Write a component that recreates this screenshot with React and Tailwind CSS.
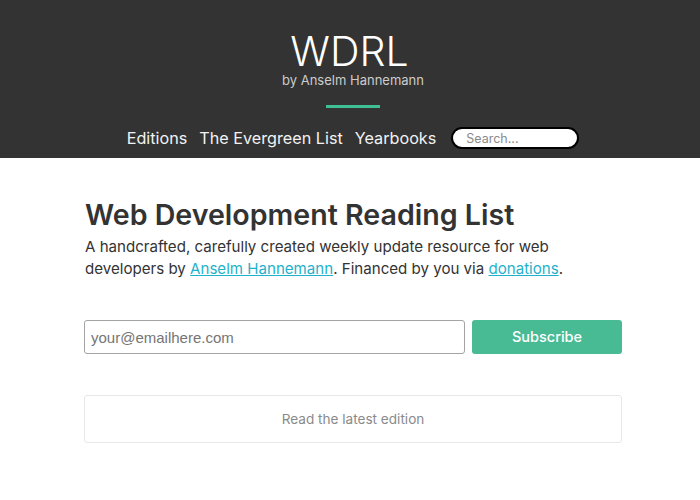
export default function App() {
  return (
    <div className="min-h-[500px] bg-white" style={{ fontFamily: 'Inter, "Noto Sans", sans-serif' }}>
      <header className="h-[158px] bg-[#333333] pt-[28px] pl-[6px] flex flex-col items-center">
        <h1 className="pr-[7px] text-[41px] leading-[46px] font-light text-white">WDRL</h1>
        <div className="-mt-[2px] text-[13px] leading-[16px] text-[#cccccc]">by Anselm Hannemann</div>
        <div className="mt-[17px] h-[3px] w-[54px] bg-[#3fbf94]" />
        <nav className="mt-[18px] flex items-center h-[24px] text-[16.2px] leading-[20px] text-[#f2f2f2]">
          <a className="mr-[12px]">Editions</a>
          <a className="mr-[12px]">The Evergreen List</a>
          <a className="mr-[15px]">Yearbooks</a>
          <input
            className="h-[22px] w-[128px] rounded-full border-2 border-black bg-white px-[13px] text-[12.5px] text-[#333] placeholder:text-[#8a8a8a] outline-none"
            placeholder="Search..."
          />
        </nav>
      </header>
      <main className="ml-[84px] w-[538px]">
        <h2 className="mt-[40px] text-[28.6px] leading-[34px] font-semibold text-[#333333] pl-px">
          Web Development Reading List
        </h2>
        <p className="mt-[4px] text-[15.1px] leading-[22px] text-[#333333] pl-px">
          A handcrafted, carefully created weekly update resource for web developers by{' '}
          <a className="text-[#1fb1cc] underline">Anselm Hannemann</a>. Financed by you via{' '}
          <a className="text-[#1fb1cc] underline">donations</a>.
        </p>
        <div className="mt-[40px] flex gap-[7px]">
          <input
            className="h-[34px] w-[381px] rounded-[3px] border-[1.5px] border-[#a3a3a3] bg-white px-[6px] text-[15px] text-[#333] placeholder:text-[#757575] outline-none"
            style={{ fontFamily: '"Liberation Sans", Arial, sans-serif' }}
            placeholder="your@emailhere.com"
          />
          <button className="h-[34px] w-[150px] rounded-[3px] bg-[#48bb95] text-[14.5px] font-medium text-white">
            Subscribe
          </button>
        </div>
        <div className="mt-[41px] h-[48px] rounded-[3px] border border-[#e8e8e8] flex items-center justify-center text-[13.6px] text-[#8a8a8a]">
          Read the latest edition
        </div>
      </main>
    </div>
  );
}
